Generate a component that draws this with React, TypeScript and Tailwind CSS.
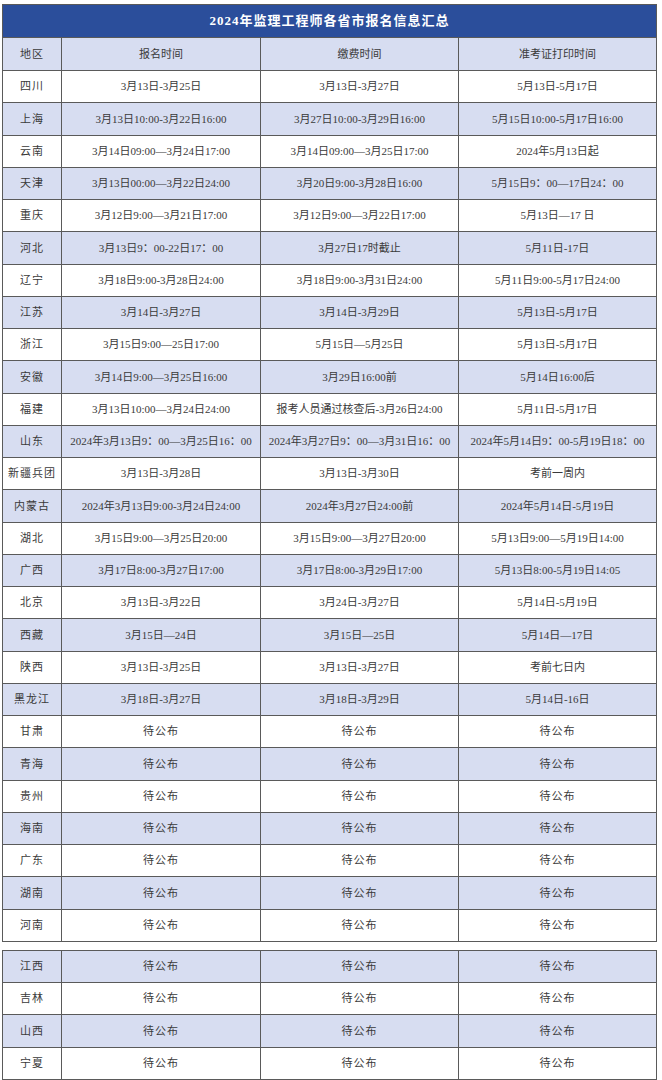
import React from "react";

type Row = [string, string, string, string];

const rows1: Row[] = [
  ["四川", "3月13日-3月25日", "3月13日-3月27日", "5月13日-5月17日"],
  ["上海", "3月13日10:00-3月22日16:00", "3月27日10:00-3月29日16:00", "5月15日10:00-5月17日16:00"],
  ["云南", "3月14日09:00—3月24日17:00", "3月14日09:00—3月25日17:00", "2024年5月13日起"],
  ["天津", "3月13日00:00—3月22日24:00", "3月20日9:00-3月28日16:00", "5月15日9：00—17日24：00"],
  ["重庆", "3月12日9:00—3月21日17:00", "3月12日9:00—3月22日17:00", "5月13日—17 日"],
  ["河北", "3月13日9：00-22日17：00", "3月27日17时截止", "5月11日-17日"],
  ["辽宁", "3月18日9:00-3月28日24:00", "3月18日9:00-3月31日24:00", "5月11日9:00-5月17日24:00"],
  ["江苏", "3月14日-3月27日", "3月14日-3月29日", "5月13日-5月17日"],
  ["浙江", "3月15日9:00—25日17:00", "5月15日—5月25日", "5月13日-5月17日"],
  ["安徽", "3月14日9:00—3月25日16:00", "3月29日16:00前", "5月14日16:00后"],
  ["福建", "3月13日10:00—3月24日24:00", "报考人员通过核查后-3月26日24:00", "5月11日-5月17日"],
  ["山东", "2024年3月13日9：00—3月25日16：00", "2024年3月27日9：00—3月31日16：00", "2024年5月14日9：00-5月19日18：00"],
  ["新疆兵团", "3月13日-3月28日", "3月13日-3月30日", "考前一周内"],
  ["内蒙古", "2024年3月13日9:00-3月24日24:00", "2024年3月27日24:00前", "2024年5月14日-5月19日"],
  ["湖北", "3月15日9:00—3月25日20:00", "3月15日9:00—3月27日20:00", "5月13日9:00—5月19日14:00"],
  ["广西", "3月17日8:00-3月27日17:00", "3月17日8:00-3月29日17:00", "5月13日8:00-5月19日14:05"],
  ["北京", "3月13日-3月22日", "3月24日-3月27日", "5月14日-5月19日"],
  ["西藏", "3月15日—24日", "3月15日—25日", "5月14日—17日"],
  ["陕西", "3月13日-3月25日", "3月13日-3月27日", "考前七日内"],
  ["黑龙江", "3月18日-3月27日", "3月18日-3月29日", "5月14日-16日"],
  ["甘肃", "待公布", "待公布", "待公布"],
  ["青海", "待公布", "待公布", "待公布"],
  ["贵州", "待公布", "待公布", "待公布"],
  ["海南", "待公布", "待公布", "待公布"],
  ["广东", "待公布", "待公布", "待公布"],
  ["湖南", "待公布", "待公布", "待公布"],
  ["河南", "待公布", "待公布", "待公布"],
];

const rows2: Row[] = [
  ["江西", "待公布", "待公布", "待公布"],
  ["吉林", "待公布", "待公布", "待公布"],
  ["山西", "待公布", "待公布", "待公布"],
  ["宁夏", "待公布", "待公布", "待公布"],
];

const font = {
  fontFamily: '"Liberation Serif", "Noto Sans CJK SC", serif',
};

function TRow({ r, blue, header }: { r: Row; blue: boolean; header?: boolean }) {
  return (
    <div
      className={`grid grid-cols-[59px_199px_198px_1fr] border-b border-[#5a5a5a] ${
        header ? "h-[33px]" : "h-[32.26px]"
      } ${blue ? "bg-[#d7ddf1]" : "bg-white"}`}
    >
      {r.map((c, i) => (
        <div
          key={i}
          className={`flex items-center justify-center text-[11px] text-[#3a3a3a] whitespace-nowrap ${
            i < 3 ? "border-r border-[#5a5a5a]" : ""
          } ${c === "待公布" || i === 0 ? "tracking-[1px]" : ""}`}
        >
          {c}
        </div>
      ))}
    </div>
  );
}

export default function App() {
  return (
    <div className="w-[662px] h-[1080px] bg-white pt-[4px] pl-[2px]" style={font}>
      <div className="w-[655px] border-l border-r border-t border-[#5a5a5a]">
        <div className="h-[33px] bg-[#2b4e9b] flex items-center justify-center text-white text-[13px] font-bold tracking-[1px] border-b border-[#5a5a5a]">
          2024年监理工程师各省市报名信息汇总
        </div>
        <TRow r={["地区", "报名时间", "缴费时间", "准考证打印时间"]} blue header />
        {rows1.map((r, i) => (
          <TRow key={i} r={r} blue={i % 2 === 1} />
        ))}
      </div>
      <div className="h-[8px]" />
      <div className="w-[655px] border-l border-r border-t border-[#5a5a5a]">
        {rows2.map((r, i) => (
          <TRow key={i} r={r} blue={i % 2 === 0} />
        ))}
      </div>
    </div>
  );
}
